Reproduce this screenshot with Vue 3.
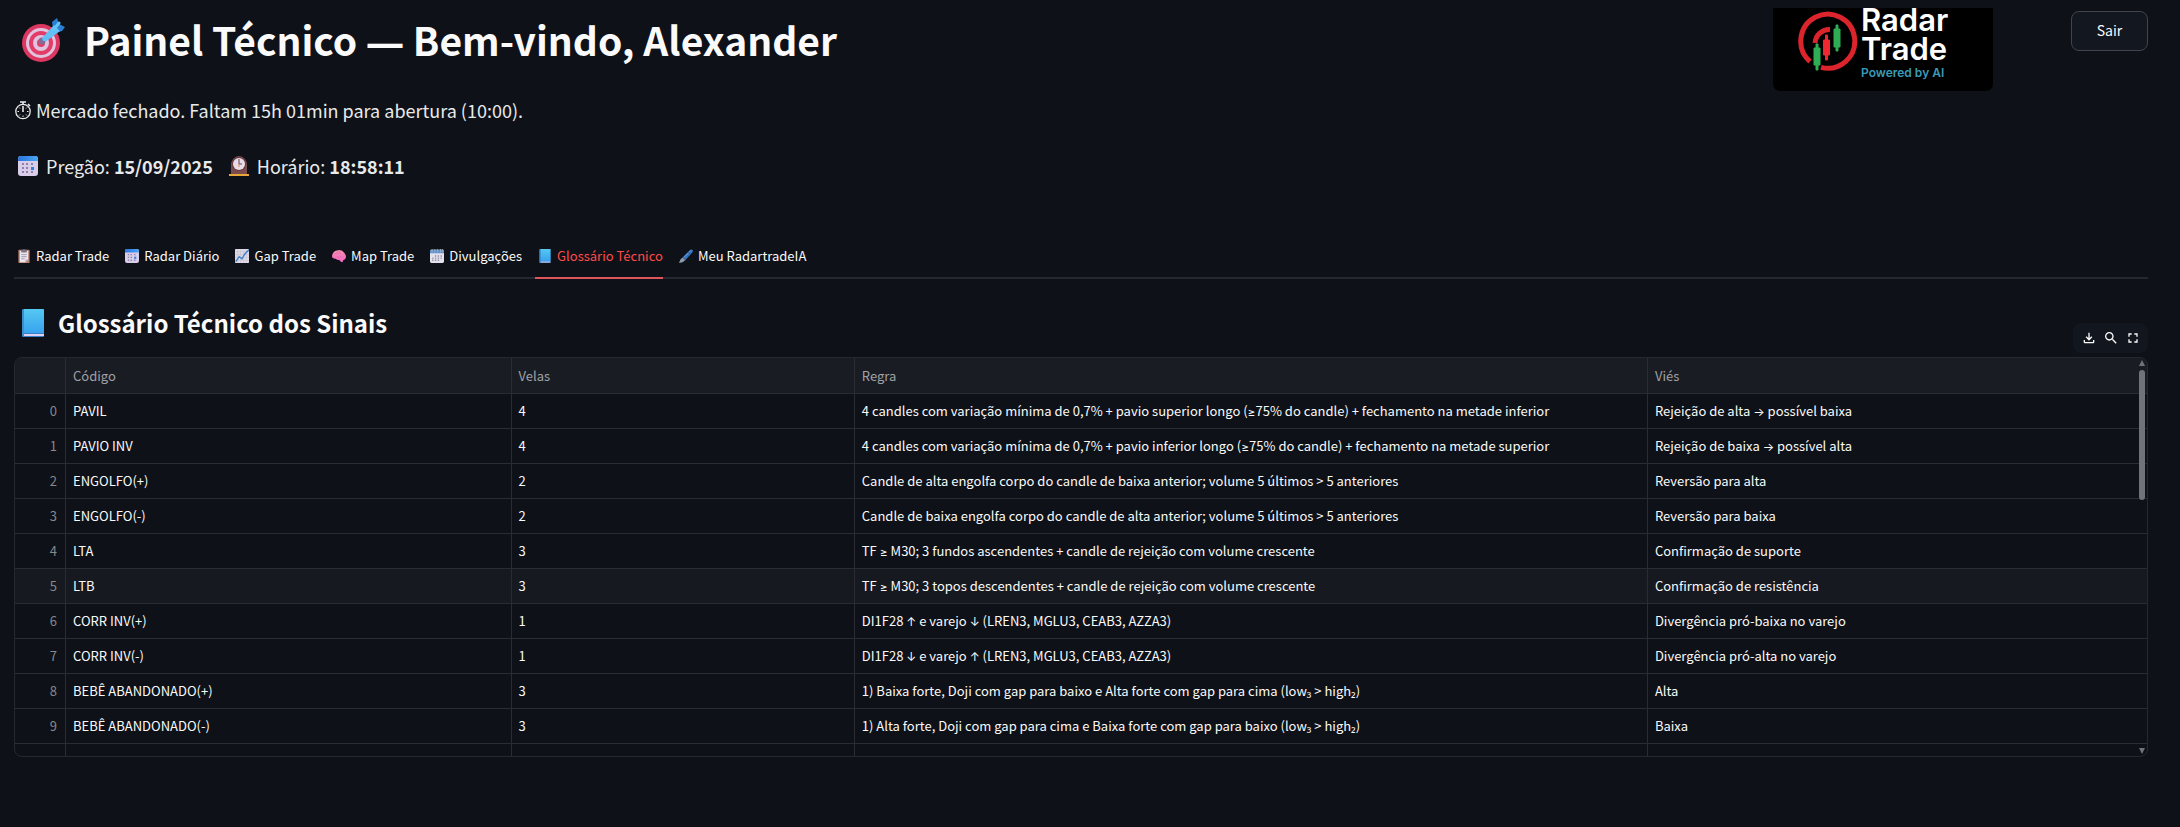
<script setup>
import { ref } from 'vue'

const tabs = [
  { label: 'Radar Trade', icon: 'clipboard' },
  { label: 'Radar Diário', icon: 'calendar' },
  { label: 'Gap Trade', icon: 'chart' },
  { label: 'Map Trade', icon: 'brain' },
  { label: 'Divulgações', icon: 'spiral' },
  { label: 'Glossário Técnico', icon: 'book' },
  { label: 'Meu RadartradeIA', icon: 'pen' }
]
const activeTab = ref('Glossário Técnico')

const columns = ['Código', 'Velas', 'Regra', 'Viés']
const rows = [
  ['PAVIL', '4', '4 candles com variação mínima de 0,7% + pavio superior longo (≥75% do candle) + fechamento na metade inferior', 'Rejeição de alta → possível baixa'],
  ['PAVIO INV', '4', '4 candles com variação mínima de 0,7% + pavio inferior longo (≥75% do candle) + fechamento na metade superior', 'Rejeição de baixa → possível alta'],
  ['ENGOLFO(+)', '2', 'Candle de alta engolfa corpo do candle de baixa anterior; volume 5 últimos > 5 anteriores', 'Reversão para alta'],
  ['ENGOLFO(-)', '2', 'Candle de baixa engolfa corpo do candle de alta anterior; volume 5 últimos > 5 anteriores', 'Reversão para baixa'],
  ['LTA', '3', 'TF ≥ M30; 3 fundos ascendentes + candle de rejeição com volume crescente', 'Confirmação de suporte'],
  ['LTB', '3', 'TF ≥ M30; 3 topos descendentes + candle de rejeição com volume crescente', 'Confirmação de resistência'],
  ['CORR INV(+)', '1', 'DI1F28 ↑ e varejo ↓ (LREN3, MGLU3, CEAB3, AZZA3)', 'Divergência pró-baixa no varejo'],
  ['CORR INV(-)', '1', 'DI1F28 ↓ e varejo ↑ (LREN3, MGLU3, CEAB3, AZZA3)', 'Divergência pró-alta no varejo'],
  ['BEBÊ ABANDONADO(+)', '3', '1) Baixa forte, Doji com gap para baixo e Alta forte com gap para cima (low₃ > high₂)', 'Alta'],
  ['BEBÊ ABANDONADO(-)', '3', '1) Alta forte, Doji com gap para cima e Baixa forte com gap para baixo (low₃ > high₂)', 'Baixa']
]
const highlighted = 5

// Arrows and comparison signs are set in a proportional face.
const parts = (text) => text.split(/([≥→↑↓])/).filter(Boolean)
const isSymbol = (part) => /^[≥→↑↓]$/.test(part)
</script>

<template>
  <svg class="defs" aria-hidden="true">
    <defs>
      <linearGradient id="gBook" x1="0" y1="0" x2="0" y2="1"><stop offset="0" stop-color="#55c8f2" /><stop offset="1" stop-color="#38a4ee" /></linearGradient>
      <linearGradient id="gCal" x1="0" y1="0" x2="1" y2="0"><stop offset="0" stop-color="#2a74dc" /><stop offset="1" stop-color="#4aa6f4" /></linearGradient>
      <linearGradient id="gBrain" x1="0" y1="0" x2="0" y2="1"><stop offset="0" stop-color="#f58fae" /><stop offset="1" stop-color="#f765c8" /></linearGradient>
      <symbol id="target" viewBox="0 0 44 44">
        <circle cx="19" cy="25" r="19" fill="#db3760" />
        <circle cx="19" cy="25" r="15" fill="#dfc3df" />
        <circle cx="19" cy="25" r="12" fill="#e33c66" />
        <circle cx="19" cy="25" r="8" fill="#dfc3df" />
        <circle cx="19" cy="25" r="4" fill="#e33c66" />
        <circle cx="20" cy="23" r="3.500" fill="#846b95" />
        <path d="M20 23 32 11" stroke="#796a9a" stroke-width="2.500" />
        <path d="m31 10-1-6 5-4 2 6 6 3-3 4-7 2z" fill="#287fd4" />
        <path d="M21 19 32 7l6 6-12 9q-5 3-6-1z" fill="#62c0f6" />
        <path d="m32 11 5-6" stroke="#63c4f8" stroke-width="3" stroke-linecap="round" />
      </symbol>
      <symbol id="calendar" viewBox="0 0 20 20">
        <rect width="20" height="20" rx="3" fill="#d9cdea" />
        <path d="M0 5V3q0-3 3-3h14q3 0 3 3v2z" fill="url(#gCal)" />
        <g fill="#8c83ac"><path d="M4 7h2v2H4zM8 7h2v2H8zM13 7h2v2h-2zM4 11h2v2H4zM8 11h2v2H8zM4 15h2v2H4zM8 15h2v2H8z" /><path d="M13 15h2v2h-2z" /></g>
        <path d="M13 11h3v3h-3z" fill="#2f83e0" />
      </symbol>
      <symbol id="spiral" viewBox="0 0 20 20">
        <rect y="1" width="20" height="19" rx="2" fill="#e3e1ec" />
        <path d="M0 6V3q0-2 2-2h16q2 0 2 2v3z" fill="#5c93cf" />
        <path d="M3 0v5M7 0v5M11 0v5M15 0v5M18 0v4" stroke="#b5bcc8" stroke-width="1" />
        <g fill="#9290a8"><path d="M7 9h2v2H7zM11 9h2v2h-2zM15 9h2v2h-2zM3 12h2v2H3zM7 12h2v2H7zM11 12h2v2h-2zM15 12h2v2h-2zM3 15h2v2H3zM7 15h2v2H7zM11 15h2v2h-2z" /></g>
      </symbol>
      <symbol id="clock" viewBox="0 0 20 20">
        <path d="M2 18V9a8 9 0 0 1 16 0v9z" fill="#7c4b4c" />
        <path d="M0 18h20v2H0z" fill="#e9a63c" />
        <circle cx="10" cy="8" r="7" fill="#66393f" />
        <circle cx="10" cy="8" r="6" fill="#e9dce6" />
        <path d="M10 3v5h3" fill="none" stroke="#56465c" stroke-width="1" />
        <path d="M10 8v3" stroke="#e48b42" stroke-width="1" />
      </symbol>
      <symbol id="stopwatch" viewBox="0 0 18 20">
        <g fill="none" stroke="#e8e9eb">
          <circle cx="9" cy="11.500" r="7.200" stroke-width="1.300" />
          <path d="M9 6v6" stroke-width="1.600" />
          <path d="M6 2h6M9 2v3M14 4l2 2" stroke-width="1.600" />
          <path d="M3.500 11.500h1.500M13 11.500h1.500M9 17v-1.500M5 7.500l1 1M13 7.500l-1 1M5 15.500l1-1M13 15.500l-1-1" stroke-width="1" />
        </g>
      </symbol>
      <symbol id="clipboard" viewBox="0 0 20 20">
        <rect x="2" y="1" width="16" height="19" rx="1" fill="#bd806c" />
        <path d="M4 3h12v12l-4 4H4z" fill="#ece6f1" />
        <path d="m12 19 0-4h4z" fill="#baaac6" />
        <path d="M6 1h3q1-2 2 0h3v4H6z" fill="#77768a" />
        <path d="M6 8h8M6 11h8M6 14h5" stroke="#9b94aa" stroke-width="1.300" />
      </symbol>
      <symbol id="chart" viewBox="0 0 20 20">
        <rect width="20" height="20" rx="1" fill="#e0dce8" />
        <path d="M4 0v20M8 0v20M12 0v20M16 0v20M0 4h20M0 8h20M0 12h20M0 16h20" stroke="#bab7c9" stroke-width=".7" />
        <path d="m1 18 5-7 4 3 4-7 6-6" fill="none" stroke="#3d80c8" stroke-width="2" />
      </symbol>
      <symbol id="brain" viewBox="0 0 20 20">
        <path d="M0 10q1-7 7-8 7-2 11 4 4 6 0 9l-2 1-1 3q-3 0-4-3-4 0-6-2-5 0-5-4z" fill="url(#gBrain)" />
        <path d="M4 8q2-3 5-2M10 3q0 3 3 4M7 11q4 2 6-1M14 12q2 0 4-2" fill="none" stroke="#e0609f" stroke-width=".8" />
      </symbol>
      <symbol id="book" viewBox="0 0 22 28">
        <rect width="22" height="28" rx="1" fill="#397fc7" />
        <path d="M2 25h20v2H2z" fill="#ddd0f3" />
        <path d="M2 0h19q1 0 1 1v23H2z" fill="url(#gBook)" />
        <path d="M0 1h2v26H0z" fill="#3c8fcc" />
      </symbol>
      <symbol id="pen" viewBox="0 0 20 20">
        <path d="m5 12 10-10q2-2 4-1t0 4L9 16z" fill="#386fb9" />
        <path d="m7 12 10-10" stroke="#6fa9e0" stroke-width="1.300" />
        <path d="m0 20 2-5 3-3 4 4-4 3z" fill="#8d9aaa" />
        <path d="m13 4 4 4" stroke="#244b86" stroke-width="1" />
      </symbol>
    </defs>
  </svg>

  <main class="page">
    <header class="top">
      <h1 class="title">
        <svg class="title-icon" aria-hidden="true"><use href="#target" /></svg>
        <span>Painel Técnico <span class="dash">—</span> Bem-vindo, Alexander</span>
      </h1>
      <svg class="logo" viewBox="0 0 220 83" role="img" aria-label="Radar Trade">
        <path d="M0 0h220v75q0 8-8 8H8q-8 0-8-8z" fill="#000" />
        <path d="M48 59.300A27 27 0 1 0 37 53.500" fill="none" stroke="#dc242c" stroke-width="5" />
        <path d="M42 35A14.500 14.500 0 0 1 57 21.500" fill="none" stroke="#dc242c" stroke-width="5" />
        <path d="M43 36h2v4h2v17h-2v5h-2v-5h-2V40h2z" fill="#2ead54" stroke="#2ead54" />
        <path d="M52.500 27h2v5h2v15h-2v5h-2v-5h-2V32h2z" fill="#ee2730" stroke="#ee2730" />
        <path d="M63 17h2v4h2v18h-2v4h-2v-4h-2V21h2z" fill="#2ead54" stroke="#2ead54" />
        <text x="88" y="23" class="logo-name">Radar</text>
        <text x="88" y="52" class="logo-name">Trade</text>
        <text x="88" y="69" class="logo-sub">Powered by AI</text>
      </svg>
      <button class="exit" type="button">Sair</button>
    </header>

    <p class="status">
      <svg class="watch" aria-hidden="true"><use href="#stopwatch" /></svg>
      <span>Mercado fechado. Faltam 15h 01min para abertura (10:00).</span>
    </p>

    <div class="session">
      <p class="stamp">
        <svg class="stamp-icon" aria-hidden="true"><use href="#calendar" /></svg>
        <span>Pregão: <strong>15/09/2025</strong></span>
      </p>
      <p class="stamp">
        <svg class="stamp-icon" aria-hidden="true"><use href="#clock" /></svg>
        <span>Horário: <strong>18:58:11</strong></span>
      </p>
    </div>

    <nav class="tabs" role="tablist">
      <button
        v-for="tab in tabs"
        :key="tab.label"
        type="button"
        role="tab"
        class="tab"
        :class="{ active: tab.label === activeTab }"
        :aria-selected="tab.label === activeTab"
        @click="activeTab = tab.label"
      >
        <svg class="tab-icon" aria-hidden="true"><use :href="'#' + tab.icon" /></svg>
        <span>{{ tab.label }}</span>
      </button>
    </nav>

    <section>
      <div class="section-head">
        <h2 class="subtitle">
          <svg class="subtitle-icon" aria-hidden="true"><use href="#book" /></svg>
          <span>Glossário Técnico dos Sinais</span>
        </h2>
        <div class="toolbar">
          <button type="button" class="tool" aria-label="Baixar">
            <svg viewBox="0 0 24 24"><path d="M12 16 7 11l1.400-1.450L11 12.150V4h2v8.150l2.600-2.600L17 11l-5 5Zm-6 4q-.825 0-1.412-.587Q4 18.825 4 18v-3h2v3h12v-3h2v3q0 .825-.587 1.413Q18.825 20 18 20Z" /></svg>
          </button>
          <button type="button" class="tool" aria-label="Buscar">
            <svg viewBox="0 0 24 24"><path d="M15.500 14h-.79l-.28-.27C15.410 12.590 16 11.110 16 9.500 16 5.910 13.090 3 9.500 3S3 5.910 3 9.500 5.910 16 9.500 16c1.610 0 3.090-.59 4.230-1.570l.27.28v.79l5 4.990L20.490 19l-4.990-5zm-6 0C7.010 14 5 11.990 5 9.500S7.010 5 9.500 5 14 7.010 14 9.500 11.990 14 9.500 14z" /></svg>
          </button>
          <button type="button" class="tool" aria-label="Tela cheia">
            <svg viewBox="0 0 24 24"><path d="M7 14H5v5h5v-2H7v-3zm-2-4h2V7h3V5H5v5zm12 7h-3v2h5v-5h-2v3zM14 5v2h3v3h2V5h-5z" /></svg>
          </button>
        </div>
      </div>

      <div class="frame">
        <div class="scroller">
          <table class="grid">
            <colgroup>
              <col class="c-index" /><col class="c-code" /><col class="c-count" /><col class="c-rule" /><col class="c-bias" />
            </colgroup>
            <thead>
              <tr>
                <th aria-label="Índice"></th>
                <th v-for="name in columns" :key="name" scope="col">{{ name }}</th>
              </tr>
            </thead>
            <tbody>
              <tr v-for="(row, i) in rows" :key="i" :class="{ hover: i === highlighted }">
                <td class="index">{{ i }}</td>
                <td v-for="(cell, c) in row" :key="c"><span v-for="(part, p) in parts(cell)" :key="p" :class="{ symbol: isSymbol(part) }">{{ part }}</span></td>
              </tr>
              <tr>
                <td v-for="n in 5" :key="n"></td>
              </tr>
            </tbody>
          </table>
        </div>
        <div class="bar" aria-hidden="true">
          <span class="arrow up"></span>
          <span class="track"><span class="thumb"></span></span>
          <span class="arrow down"></span>
        </div>
      </div>
    </section>
  </main>
</template>

<style>
body {
  margin: 0;
  background: #0e1117;
}
</style>

<style scoped>
.defs {
  position: absolute;
  width: 0;
  height: 0;
}
.page {
  box-sizing: border-box;
  padding: 8px 32px 0 14px;
  color: #fafafa;
  font-family: "Noto Sans CJK JP", "Noto Sans", sans-serif;
}
.page svg {
  flex: none;
}
button {
  font-family: inherit;
  color: inherit;
  cursor: pointer;
}
.top {
  display: flex;
  align-items: flex-start;
  height: 83px;
}
.title {
  display: flex;
  align-items: center;
  gap: 18px;
  flex: 1;
  margin: 0;
  padding: 1px 0 0 8px;
  font-size: 39px;
  line-height: 60px;
  font-weight: 700;
}
.title-icon {
  width: 44px;
  height: 44px;
}
.dash {
  font-family: "Open Sans", sans-serif;
  font-size: 38px;
}
.logo {
  width: 220px;
  height: 83px;
}
.logo-name {
  font: 600 31px Inter, sans-serif;
  fill: #fff;
}
.logo-sub {
  font: 600 12px Inter, sans-serif;
  fill: #3a9ab9;
}
.exit {
  box-sizing: border-box;
  width: 77px;
  height: 40px;
  margin: 3px 0 0 78px;
  padding: 0 0 2px;
  border: 1px solid #41444c;
  border-radius: 8px;
  background: #131720;
  font-size: 14px;
  line-height: 20px;
}
.status,
.stamp {
  display: flex;
  align-items: center;
  margin: 0;
  font-size: 18px;
  line-height: 28px;
  color: #e8e9eb;
}
.status {
  gap: 4px;
  margin-top: 5px;
}
.watch {
  width: 18px;
  height: 20px;
}
.session {
  display: flex;
  gap: 16px;
  margin-top: 28px;
  padding-left: 4px;
}
.stamp {
  gap: 8px;
}
.stamp-icon {
  width: 20px;
  height: 20px;
}
.tabs {
  display: flex;
  gap: 13px;
  height: 40px;
  margin-top: 57px;
  border-bottom: 2px solid #262730;
}
.tab {
  display: flex;
  align-items: center;
  gap: 5px;
  height: 42px;
  padding: 0 0 3px 3px;
  border: 0;
  border-bottom: 2px solid transparent;
  background: none;
  font-size: 13px;
  line-height: 20px;
  white-space: nowrap;
}
.tab.active {
  color: #ff4b4b;
  border-bottom-color: #e0555b;
}
.tab-icon {
  width: 14px;
  height: 14px;
}
.section-head {
  display: flex;
  align-items: flex-end;
  justify-content: space-between;
  margin-top: 24px;
}
.subtitle {
  display: flex;
  align-items: center;
  gap: 14px;
  margin: 0;
  padding: 0 0 15px 8px;
  font-size: 24px;
  line-height: 39px;
  font-weight: 600;
}
.subtitle-icon {
  width: 22px;
  height: 28px;
}
.toolbar {
  display: flex;
  align-items: center;
  justify-content: center;
  gap: 6px;
  box-sizing: border-box;
  width: 75px;
  height: 30px;
  margin-bottom: 4px;
  border-radius: 8px;
  background: #12161f;
}
.tool {
  display: flex;
  padding: 0;
  border: 0;
  background: none;
}
.tool svg {
  width: 16px;
  height: 16px;
  fill: #fafafa;
}
.frame {
  position: relative;
  box-sizing: border-box;
  border: 1px solid #25282e;
  border-radius: 8px;
  overflow: hidden;
}
.scroller {
  height: 398px;
  overflow-y: auto;
  scrollbar-width: none;
}
.grid {
  width: 100%;
  table-layout: fixed;
  border-collapse: separate;
  border-spacing: 0;
  font-size: 13px;
  line-height: 20px;
}
.c-index { width: 51px; }
.c-code { width: 20.9%; }
.c-count { width: 16.1%; }
.c-rule { width: 37.2%; }
.c-bias { width: auto; }
th,
td {
  box-sizing: border-box;
  height: 35px;
  padding: 0 8px 0 7px;
  border-right: 1px solid #292c33;
  border-bottom: 1px solid #292c33;
  text-align: left;
  font-weight: 400;
  white-space: nowrap;
  overflow: hidden;
}
th:last-child,
td:last-child {
  border-right: 0;
}
th {
  position: sticky;
  top: 0;
  height: 36px;
  background: #1a1c24;
  color: #a0a1a6;
}
.index {
  text-align: right;
  color: #85888c;
}
.hover td {
  background: #16191f;
}
.symbol {
  font-family: Inter, "Noto Sans", sans-serif;
  font-size: 12px;
}
.bar {
  position: absolute;
  top: 2px;
  right: 2px;
  bottom: 2px;
  display: flex;
  flex-direction: column;
  gap: 4px;
  width: 6px;
}
.arrow {
  border: 3px solid transparent;
}
.up {
  border-top: 0;
  border-bottom: 6px solid #717378;
}
.down {
  border-bottom: 0;
  border-top: 6px solid #717378;
}
.track {
  flex: 1;
}
.thumb {
  display: block;
  height: 130px;
  border-radius: 3px;
  background: #717378;
}
</style>
